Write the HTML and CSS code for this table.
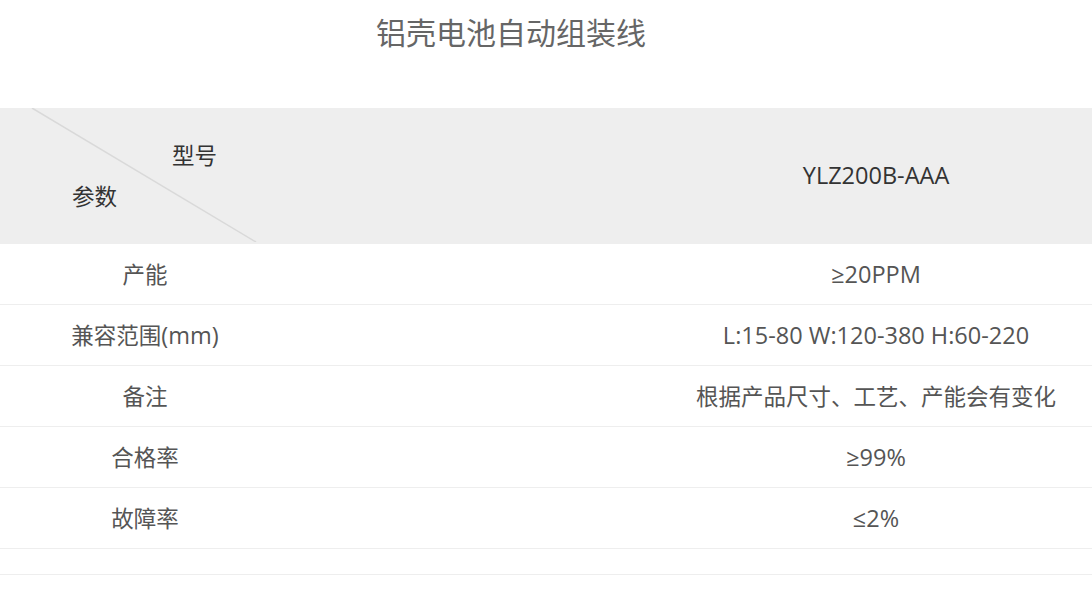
FILE: index.html
```html
<!DOCTYPE html>
<html lang="zh-CN">
<head>
<meta charset="utf-8">
<title>铝壳电池自动组装线</title>
<link rel="stylesheet" href="styles.css">
</head>
<body>
<div class="page">
  <h1 class="title">铝壳电池自动组装线</h1>
  <table class="spec">
    <colgroup><col class="c1"><col class="c2"></colgroup>
    <tr class="head">
      <td class="corner">
        <svg class="diag" width="290" height="134" viewBox="0 0 290 134"><line x1="32" y1="0" x2="256" y2="134" stroke="#d9d9d9" stroke-width="1.5"/></svg>
        <div class="lbl-top zh">型号</div>
        <div class="lbl-bot zh">参数</div>
      </td>
      <td class="model">YLZ200B-AAA</td>
    </tr>
    <tr><td><span class="zh">产能</span></td><td>≥20PPM</td></tr>
    <tr><td><span class="zh">兼容范围</span>(mm)</td><td>L:15-80 W:120-380 H:60-220</td></tr>
    <tr><td><span class="zh">备注</span></td><td><span class="zh">根据产品尺寸、工艺、产能会有变化</span></td></tr>
    <tr><td><span class="zh">合格率</span></td><td>≥99%</td></tr>
    <tr><td><span class="zh">故障率</span></td><td>≤2%</td></tr>
    <tr class="empty"><td></td><td></td></tr>
  </table>
</div>
</body>
</html>
```
FILE: styles.css
```css
html, body {
  margin: 0;
  padding: 0;
  background: #fff;
  overflow: hidden;
}
body {
  font-family: "Open Sans", "Noto Sans CJK SC", sans-serif;
  color: #555;
}
.page {
  width: 1462px;
}
.title {
  width: 1022px;
  margin: 0;
  padding-top: 13px;
  height: 108px;
  box-sizing: border-box;
  text-align: center;
  font-size: 30px;
  line-height: 40px;
  font-weight: normal;
  color: #666;
}
.spec {
  width: 1462px;
  border-collapse: collapse;
  table-layout: fixed;
  font-size: 23.5px;
}
.zh {
  font-size: 22.5px;
}
.c1 { width: 290px; }
.c2 { width: 1172px; }
.spec td {
  height: 60px;
  padding: 0;
  text-align: center;
  vertical-align: middle;
  border-bottom: 1px solid #eee;
  line-height: 30px;
}
.spec tr.head td {
  background: #eeeeee;
  height: 134px;
  border-bottom: none;
  color: #333;
}
.spec td.corner {
  position: relative;
  text-align: left;
  vertical-align: top;
  padding-top: 33px;
  box-sizing: border-box;
}
.diag {
  position: absolute;
  left: 0;
  top: 0;
}
.lbl-top {
  margin-left: 172px;
}
.lbl-bot {
  margin-left: 72px;
  margin-top: 11px;
}
.spec td.model {
  padding-bottom: 2px;
}
.spec tr.empty td {
  height: 25px;
}
```
